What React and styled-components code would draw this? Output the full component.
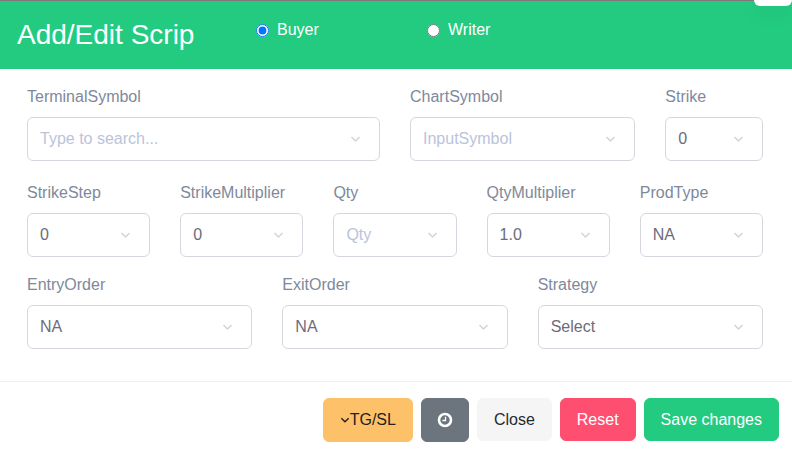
import React, { useId } from "react";
import styled, { createGlobalStyle } from "styled-components";

const GlobalStyle = createGlobalStyle`
  *, *::before, *::after { box-sizing: border-box; }
  body {
    margin: 0;
    background: #fff;
    font-family: "Liberation Sans", Arial, sans-serif;
    font-size: 16px;
    line-height: 24px;
    overflow-x: hidden;
  }
  button, input, select { font: inherit; }
`;

const Dialog = styled.form`
  position: relative;
  overflow: hidden;
  background: #fff;
`;

const Header = styled.header`
  display: grid;
  grid-template-columns: 239fr 171fr 365fr;
  align-items: start;
  padding: 17px 0 18px 17px;
  border-top: 1px solid #80787c;
  background: #23cb80;
  color: #fff;
`;

const Title = styled.h1`
  margin: 0;
  font-size: 28px;
  font-weight: 400;
  line-height: 33px;
`;

const RadioLabel = styled.label`
  display: flex;
  align-items: center;
  gap: 8px;
`;

const Radio = styled.input`
  width: 13px;
  height: 13px;
  margin: 0;
`;

const CornerTab = styled.div`
  position: absolute;
  top: 0;
  right: 0;
  width: 38px;
  height: 6px;
  border-radius: 0 0 6px 6px;
  background: #fff;
  box-shadow: 0 4px 20px rgba(18, 38, 63, 0.12);
`;

const Body = styled.div`
  display: grid;
  gap: 16px;
  padding: 16px 29px 32px 27px;
`;

const FieldRow = styled.div`
  display: grid;
  grid-template-columns: repeat(${(p) => p.$columns}, minmax(0, 1fr));
  column-gap: 30px;
  padding-bottom: ${(p) => (p.$spaced ? 4 : 0)}px;
`;

const FieldGroup = styled.div`
  display: grid;
  gap: 8px;
  grid-column: span ${(p) => p.$span};
`;

const FieldLabel = styled.label`
  color: #7e899b;
`;

const ControlShell = styled.div`
  display: grid;
  align-items: center;
  color: #d3d3dc;

  > * { grid-area: 1 / 1; }
  > svg {
    justify-self: end;
    margin-right: 19px;
    pointer-events: none;
  }
`;

const Control = styled.input`
  width: 100%;
  min-width: 0;
  height: 44px;
  padding: 0 40px 0 12px;
  border: 1px solid #d6d6df;
  border-radius: 6px;
  outline: none;
  appearance: none;
  background: #fff;
  color: #6e6b7b;

  &::placeholder { color: #b9c4da; opacity: 1; }
  &:focus { border-color: #23cb80; }
`;

const Footer = styled.footer`
  display: flex;
  flex-wrap: wrap;
  justify-content: flex-end;
  align-items: flex-start;
  gap: 8px;
  padding: 16px 13px;
  border-top: 1px solid #ededf3;
`;

const tones = {
  warning: ["#fdc16a", "#212121"],
  secondary: ["#6c757d", "#fff"],
  light: ["#f5f5f5", "#242a30"],
  danger: ["#ff4f70", "#fff"],
  success: ["#23cb80", "#fff"],
};

const Button = styled.button`
  display: inline-flex;
  align-items: center;
  justify-content: center;
  min-height: ${(p) => (p.$tall ? 44 : 43)}px;
  padding: 0 16px;
  border: 1px solid ${(p) => tones[p.$tone][0]};
  border-radius: 6px;
  background: ${(p) => tones[p.$tone][0]};
  color: ${(p) => tones[p.$tone][1]};
  cursor: pointer;
`;

function Chevron({ width = 11 }) {
  return (
    <svg width={width} height="8" viewBox="0 0 11 8" fill="none" stroke="currentColor" strokeWidth="1.5" aria-hidden="true">
      <path d="M1.5 2 5.5 6 9.5 2" />
    </svg>
  );
}

function ClockIcon() {
  return (
    <svg width="14" height="14" viewBox="0 0 14 14" fill="none" stroke="currentColor" overflow="visible" aria-hidden="true">
      <circle cx="7" cy="7" r="6" strokeWidth="2.6" />
      <path d="M7.5 3.8V7.5H4.4" strokeWidth="1.3" />
    </svg>
  );
}

function Field({ label, span = 1, placeholder, value }) {
  const id = useId();
  return (
    <FieldGroup $span={span}>
      <FieldLabel htmlFor={id}>{label}</FieldLabel>
      <ControlShell>
        {placeholder ? (
          <Control id={id} type="text" placeholder={placeholder} />
        ) : (
          <Control as="select" id={id} defaultValue={value}>
            <option value={value}>{value}</option>
          </Control>
        )}
        <Chevron />
      </ControlShell>
    </FieldGroup>
  );
}

export default function App() {
  return (
    <>
      <GlobalStyle />
      <Dialog onSubmit={(e) => e.preventDefault()}>
        <Header>
          <Title>Add/Edit Scrip</Title>
          <RadioLabel>
            <Radio type="radio" name="side" value="buyer" defaultChecked />
            Buyer
          </RadioLabel>
          <RadioLabel>
            <Radio type="radio" name="side" value="writer" />
            Writer
          </RadioLabel>
        </Header>
        <CornerTab />
        <Body>
          <FieldRow $columns={12} $spaced>
            <Field label="TerminalSymbol" span={6} placeholder="Type to search..." />
            <Field label="ChartSymbol" span={4} placeholder="InputSymbol" />
            <Field label="Strike" span={2} value="0" />
          </FieldRow>
          <FieldRow $columns={5}>
            <Field label="StrikeStep" value="0" />
            <Field label="StrikeMultiplier" value="0" />
            <Field label="Qty" placeholder="Qty" />
            <Field label="QtyMultiplier" value="1.0" />
            <Field label="ProdType" value="NA" />
          </FieldRow>
          <FieldRow $columns={3}>
            <Field label="EntryOrder" value="NA" />
            <Field label="ExitOrder" value="NA" />
            <Field label="Strategy" value="Select" />
          </FieldRow>
        </Body>
        <Footer>
          <Button type="button" $tone="warning" $tall>
            <Chevron width={10} />
            TG/SL
          </Button>
          <Button type="button" $tone="secondary" $tall aria-label="Schedule">
            <ClockIcon />
          </Button>
          <Button type="button" $tone="light">Close</Button>
          <Button type="reset" $tone="danger">Reset</Button>
          <Button type="submit" $tone="success">Save changes</Button>
        </Footer>
      </Dialog>
    </>
  );
}
